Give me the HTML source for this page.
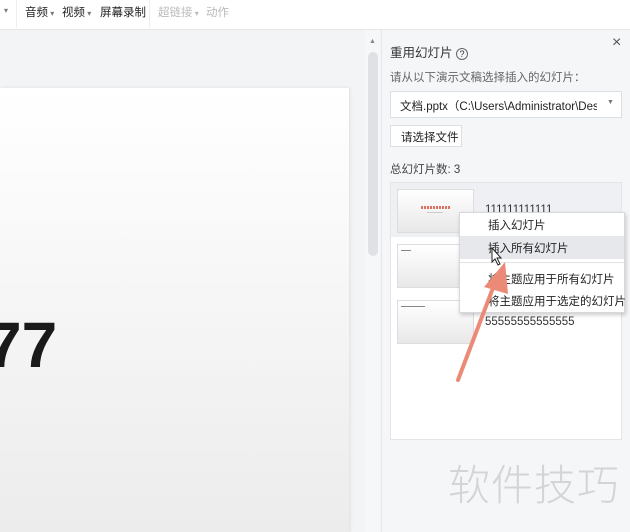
<!DOCTYPE html>
<html><head><meta charset="utf-8"><style>
*{margin:0;padding:0;box-sizing:border-box}
body{width:630px;height:532px;overflow:hidden;position:relative;background:#f3f4f6;font-family:"Liberation Sans","Noto Sans CJK SC",sans-serif;font-size:11.5px;color:#333}
.a{position:absolute;white-space:nowrap}
</style></head><body>
<div class="a" style="left:0;top:0;width:630px;height:30px;background:#fff;border-bottom:1px solid #e6e6e6"></div>
<div class="a" style="left:4px;top:6px;font-size:8px;color:#777">▾</div>
<div class="a" style="left:16px;top:0;width:1px;height:28px;background:#eee"></div>
<div class="a" style="left:25px;top:4px;color:#222">音频<span style="font-size:8px;color:#777"> ▾</span></div>
<div class="a" style="left:62px;top:4px;color:#222">视频<span style="font-size:8px;color:#777"> ▾</span></div>
<div class="a" style="left:100px;top:4px;color:#222">屏幕录制</div>
<div class="a" style="left:149px;top:0;width:1px;height:28px;background:#eee"></div>
<div class="a" style="left:158px;top:4px;color:#bbb">超链接<span style="font-size:8px"> ▾</span></div>
<div class="a" style="left:206px;top:4px;color:#bbb">动作</div>

<div class="a" style="left:0;top:88px;width:349px;height:444px;background:linear-gradient(#fff,#ececec);box-shadow:1px 0 3px #ddd"></div>
<div class="a" style="left:-14px;top:308px;font:bold 64px 'Liberation Sans',sans-serif;color:#1a1a1a">77</div>

<div class="a" style="left:365px;top:30px;width:15px;height:502px;background:#f6f7f9"></div>
<div class="a" style="left:369px;top:38px;font-size:7px;color:#888">▲</div>
<div class="a" style="left:368px;top:52px;width:10px;height:204px;background:#dfe1e5;border-radius:5px"></div>

<div class="a" style="left:381px;top:30px;width:249px;height:502px;background:#f5f6f8;border-left:1px solid #e6e8eb"></div>
<div class="a" style="left:390px;top:42px;font-size:12.5px;color:#333">重用幻灯片 <span style="display:inline-block;width:12px;height:12px;border:1px solid #666;border-radius:50%;font-size:9px;line-height:10px;text-align:center">?</span></div>
<div class="a" style="left:612px;top:34px;font-size:16px;color:#555">×</div>
<div class="a" style="left:390px;top:69px;color:#666">请从以下演示文稿选择插入的幻灯片：</div>
<div class="a" style="left:390px;top:91px;width:232px;height:27px;background:#fff;border:1px solid #dcdfe3;padding:6px 24px 0 9px;overflow:hidden;color:#222"><div style="overflow:hidden">文档.pptx（C:\Users\Administrator\Desk</div></div>
<div class="a" style="left:607px;top:99px;font-size:7px;color:#777">▼</div>
<div class="a" style="left:390px;top:125px;width:72px;height:22px;background:#fff;border:1px solid #dcdfe3;padding:3px 0 0 10px;color:#222">请选择文件</div>
<div class="a" style="left:390px;top:161px;color:#444">总幻灯片数: 3</div>

<div class="a" style="left:390px;top:182px;width:232px;height:258px;background:#fff;border:1px solid #e3e5e8"></div>
<div class="a" style="left:391px;top:183px;width:230px;height:54px;background:#eef0f3"></div>
<div class="a" style="left:397px;top:189px;width:77px;height:44px;background:linear-gradient(#fff,#e8e8e8);border:1px solid #ddd"></div>
<div class="a" style="left:421px;top:206px;width:29px;height:3px;background:repeating-linear-gradient(90deg,#e07060 0 2px,transparent 2px 3px)"></div>
<div class="a" style="left:427px;top:212px;width:16px;height:1px;background:#ccc"></div>
<div class="a" style="left:397px;top:244px;width:77px;height:44px;background:linear-gradient(#fff,#e8e8e8);border:1px solid #ddd"></div>
<div class="a" style="left:401px;top:250px;width:10px;height:1px;background:#888"></div>
<div class="a" style="left:397px;top:300px;width:77px;height:44px;background:linear-gradient(#fff,#e8e8e8);border:1px solid #ddd"></div>
<div class="a" style="left:401px;top:306px;width:24px;height:1px;background:#888"></div>
<div class="a" style="left:485px;top:204px;color:#333">111111111111</div>
<div class="a" style="left:485px;top:316px;color:#333">55555555555555</div>

<div class="a" style="left:459px;top:212px;width:166px;height:101px;background:#fff;border:1px solid #d6d8db;box-shadow:1px 2px 4px rgba(0,0,0,.2)"></div>
<div class="a" style="left:460px;top:236px;width:164px;height:23px;background:#e6e8eb"></div>
<div class="a" style="left:460px;top:262px;width:164px;height:1px;background:#e3e3e3"></div>
<div class="a" style="left:488px;top:217px;color:#222">插入幻灯片</div>
<div class="a" style="left:488px;top:240px;color:#222">插入所有幻灯片</div>
<div class="a" style="left:488px;top:271px;color:#222">将主题应用于所有幻灯片</div>
<div class="a" style="left:488px;top:293px;color:#222">将主题应用于选定的幻灯片</div>

<svg class="a" style="left:0;top:0" width="630" height="532">
<path d="M458 380 L496 280" stroke="#ec8a78" stroke-width="4" stroke-linecap="round"/>
<path d="M505 262 L484 287 L508 294 Z" fill="#ec8a78"/>
<path d="M492 248 L492 262 L495 259 L498 265 L500 264 L497 258 L501 258 Z" fill="#fff" stroke="#222" stroke-width="1"/>
</svg>

<div class="a" style="left:448px;top:458px;font-size:42px;line-height:50px;color:#d4d4d4;letter-spacing:1px;font-family:'Noto Sans CJK SC',sans-serif;font-weight:300">软件技巧</div>
</body></html>
